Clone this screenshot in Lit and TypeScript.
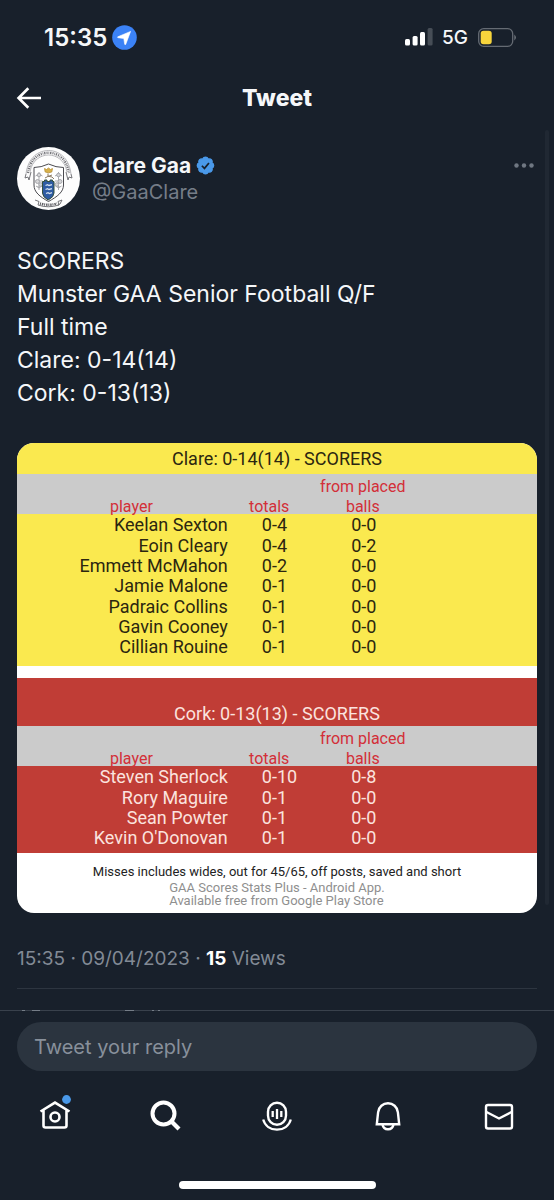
import { LitElement, html, css, svg } from "lit";
import { customElement, property } from "lit/decorators.js";

interface Scorer {
  name: string;
  total: string;
  placed: string;
}

const CLARE: Scorer[] = [
  { name: "Keelan Sexton", total: "0-4", placed: "0-0" },
  { name: "Eoin Cleary", total: "0-4", placed: "0-2" },
  { name: "Emmett McMahon", total: "0-2", placed: "0-0" },
  { name: "Jamie Malone", total: "0-1", placed: "0-0" },
  { name: "Padraic Collins", total: "0-1", placed: "0-0" },
  { name: "Gavin Cooney", total: "0-1", placed: "0-0" },
  { name: "Cillian Rouine", total: "0-1", placed: "0-0" },
];

const CORK: Scorer[] = [
  { name: "Steven Sherlock", total: "0-10", placed: "0-8" },
  { name: "Rory Maguire", total: "0-1", placed: "0-0" },
  { name: "Sean Powter", total: "0-1", placed: "0-0" },
  { name: "Kevin O'Donovan", total: "0-1", placed: "0-0" },
];

@customElement("score-table")
class ScoreTable extends LitElement {
  @property() heading = "";
  @property({ reflect: true }) team = "";
  @property({ attribute: false }) rows: Scorer[] = [];

  static styles = css`
    :host {
      display: block;
      font: 18px/20px Roboto, sans-serif;
      background: #fae94f;
      color: #2b2610;
      padding-bottom: 8px;
    }
    :host([team="cork"]) {
      background: #c03d36;
      color: #fbe3df;
      padding-bottom: 4px;
    }
    table {
      width: 100%;
      table-layout: fixed;
      border-collapse: collapse;
    }
    caption {
      padding: 6px 0 5px;
    }
    :host([team="cork"]) caption {
      padding: 26px 0 2px;
    }
    .name { width: 44%; }
    .total { width: 9%; }
    .placed { width: 27%; }
    th {
      font-size: 16px;
      font-weight: 400;
      color: #d32f38;
      background: #cbcbcb;
      padding: 3px 0 0;
      vertical-align: bottom;
      white-space: nowrap;
    }
    /* Header labels sit tight on the lower edge of the grey band. */
    .label {
      display: block;
      margin-bottom: -3px;
    }
    tbody::before {
      content: "";
      display: block;
      height: 1px;
    }
    td {
      padding: 0;
      text-align: center;
    }
    tr:nth-child(3n + 1) td { padding-bottom: 1px; }
    .player {
      text-align: right;
      padding-right: 18px;
    }
    .sum {
      text-align: left;
      padding-left: 16px;
      white-space: nowrap;
    }
    .free { padding-left: 2px; }
  `;

  render() {
    return html`
      <table>
        <caption>${this.heading}</caption>
        <colgroup>
          <col class="name" />
          <col class="total" />
          <col class="placed" />
          <col />
        </colgroup>
        <thead>
          <tr>
            <th scope="col"><span class="label">player</span></th>
            <th scope="col"><span class="label">totals</span></th>
            <th scope="col"><span class="label">from placed<br />balls</span></th>
            <th></th>
          </tr>
        </thead>
        <tbody>
          ${this.rows.map(
            (r) => html`<tr>
              <td class="player">${r.name}</td>
              <td class="sum">${r.total}</td>
              <td class="free">${r.placed}</td>
              <td></td>
            </tr>`
          )}
        </tbody>
      </table>
    `;
  }
}

const crest = html`
  <svg class="avatar" viewBox="0 0 63 63" role="img" aria-label="Clare Gaa">
    <circle cx="31.5" cy="31.5" r="31.5" fill="#fdfdfd" />
    <g fill="none">
      <path d="M9 27C11 10 22 3.500 31.500 3.500S52 10 54 27" stroke="#8a8a8e" stroke-width=".6" />
      <path d="M13 25C15 13 24 8 31.500 8S48 13 50 25" stroke="#8a8a8e" stroke-width=".6" />
      <path d="M11 26C13 12 22 5.800 31.500 5.800S50 12 52 26" stroke="#75757a" stroke-width="2.400" stroke-dasharray="1.100 .9 .7 .8 1.400 1" />
      <path d="M9 27l-1 4 3-1 1 3 2-8M54 27l1 4-3-1-1 3-2-8" stroke="#66666b" stroke-width=".9" />
      <path d="M17 20.500q7 0 14.500-3.500Q39 20.500 46.500 20.500v17.500c0 7-6 11.500-15 16.500C22.500 49.500 17 45 17 38z" fill="#fff" stroke="#4b4b50" stroke-width="1" />
    </g>
    <g stroke="#a2a3a7" stroke-width=".9" fill="#d6d6d8">
      <path d="M22 25v18M18.500 29l3.500-2 3.500 2M18.500 34h7M19 39l3 2 3-2" />
      <circle cx="22" cy="28" r="1.800" /><circle cx="20.500" cy="34.500" r="2" /><circle cx="23.700" cy="37.500" r="1.800" />
      <path d="M41.500 25v18M38 29l3.500-2 3.500 2M38 34h7M38.500 39l3 2 3-2" />
      <circle cx="41.500" cy="28" r="1.800" /><circle cx="43" cy="34.500" r="2" /><circle cx="39.800" cy="37.500" r="1.800" />
    </g>
    <path d="M27.500 21.500l2 1 2-1.500 2 1.500 2-1-.7 3.500q-3.300 1.500-6.600 0z" fill="#d9b24a" stroke="#b8923a" stroke-width=".8" />
    <path d="M31 26.500v3l4-1.500M28 31q3-3 7-1l2 2" fill="none" stroke="#8b7b63" stroke-width="1" />
    <path d="M25.500 34.500h2V33h2.500v1.500h3V33h2.500v1.500h1.500V46q0 4-5.800 7-5.700-3-5.700-7z" fill="#2d5ba3" stroke="#35503c" stroke-width="1" />
    <path d="M28.500 38.500l2-.8 1.500.8 3-.8M28.500 42.500l2-.8 1.500.8 3-.8M29 46.500l2-.8 1.500.8 2.500-.8" fill="none" stroke="#d5e2ef" stroke-width="1.300" />
    <path d="M18 53l4 1.500-1 3.500q10 3.500 21 0l-1-3.500 4-1.500-2 4-2 1" fill="none" stroke="#66666b" stroke-width=".9" />
    <path d="M23 56.500q8.500 2.500 17 0" fill="none" stroke="#606066" stroke-width="2.400" stroke-dasharray="1 .9 1.500 .8" />
  </svg>
`;

@customElement("app-root")
class AppRoot extends LitElement {
  static styles = css`
    * { box-sizing: border-box; }
    :host {
      display: flex;
      flex-direction: column;
      min-height: 100vh;
      position: relative;
      background: #18202b;
      color: #f5f7f9;
      font-family: Inter, sans-serif;
    }
    svg { display: block; flex: none; }
    button {
      appearance: none;
      border: 0;
      background: none;
      color: inherit;
      padding: 0;
      display: grid;
      place-items: center;
    }
    .status {
      height: 74px;
      padding: 0 37px 0 44px;
      display: flex;
      align-items: center;
      gap: 5px;
    }
    .clock { font-size: 24px; font-weight: 600; }
    .net { font-size: 19px; font-weight: 500; margin: 0 5px 0 4px; }
    .signal { margin-left: auto; }
    .nav {
      height: 48px;
      padding: 0 16px;
      display: grid;
      grid-template-columns: 26px 1fr 26px;
      align-items: center;
    }
    h1 {
      margin: 0;
      text-align: center;
      font-size: 23px;
      line-height: 28px;
      font-weight: 800;
    }
    main { padding: 0 17px; }
    .author {
      display: flex;
      align-items: center;
      gap: 12px;
      padding-top: 25px;
    }
    .avatar { width: 63px; height: 63px; }
    .who { flex: 1; line-height: 26px; font-size: 20px; }
    .display { display: flex; align-items: center; gap: 5px; font-size: 21px; font-weight: 700; }
    .handle { color: #757d88; }
    .more { align-self: flex-start; padding: 16px 2px 0 0; }
    .text {
      margin: 35px 0 33px;
      font-size: 23px;
      line-height: 33px;
      white-space: pre-line;
    }
    .card {
      border-radius: 17px;
      overflow: hidden;
      background: #fff;
      display: flex;
      flex-direction: column;
      gap: 12px;
    }
    .notes {
      font: 13px/13px Roboto, sans-serif;
      text-align: center;
      color: #8f8f8f;
      padding-bottom: 6px;
    }
    .misses { color: #222; margin: 0 0 3px; }
    .app {
      margin: 0 auto;
      width: max-content;
      text-align: left;
    }
    .meta {
      margin: 0;
      padding: 33px 0 16px;
      font-size: 19px;
      line-height: 26px;
      color: #828a95;
      border-bottom: 1px solid #2d3540;
    }
    .meta b { color: #fff; }
    .scroll {
      position: absolute;
      top: 130px;
      right: 5px;
      bottom: 295px;
      width: 4px;
      border-radius: 2px;
      background: #202833;
    }
    .dock {
      position: relative;
      margin-top: auto;
      border-top: 1px solid #39414c;
      padding: 11px 0;
      display: flex;
      flex-direction: column;
      align-items: center;
    }
    .peek {
      position: absolute;
      top: -1px;
      left: 17px;
    }
    .reply { align-self: stretch; padding: 0 17px; }
    input {
      display: block;
      width: 100%;
      height: 49px;
      border: 0;
      border-radius: 25px;
      background: #2b343f;
      padding: 0 17px;
      color: #fff;
      font: 20px Inter, sans-serif;
    }
    input::placeholder { color: #88909b; opacity: 1; }
    .tabs {
      align-self: stretch;
      display: grid;
      grid-template-columns: repeat(5, 1fr);
      margin: 24px 0 42px;
    }
    .indicator {
      width: 197px;
      height: 8px;
      border-radius: 4px;
      background: #fff;
    }
  `;

  private icon(label: string, body: unknown) {
    return html`<button aria-label=${label}>
      <svg width="44" height="44" viewBox="0 0 44 44" fill="none" stroke="#fff" stroke-width="2.4">${body}</svg>
    </button>`;
  }

  render() {
    return html`
      <div class="status">
        <span class="clock">15:35</span>
        <svg width="25" height="25" viewBox="0 0 25 25">
          <circle cx="12.500" cy="12.500" r="12.300" fill="#3b82f6" />
          <path d="M18.600 6.400L5.800 11.800q-.7.600.2.900l5.800.8.900 5.800q.4.900 1 .1z" fill="#fff" stroke="#fff" stroke-width=".6" stroke-linejoin="round" />
        </svg>
        <svg class="signal" width="28" height="18" viewBox="0 0 28 18" fill="#fff">
          <rect x="0" y="11" width="5" height="6.500" rx="1.500" />
          <rect x="7.600" y="8" width="5" height="9.500" rx="1.500" />
          <rect x="15" y="4" width="5" height="13.500" rx="1.500" />
          <rect x="22.600" y="0" width="5" height="17.500" rx="1.500" fill="#464d56" />
        </svg>
        <span class="net">5G</span>
        <svg width="39" height="19" viewBox="0 0 39 19">
          <rect x=".7" y=".7" width="34" height="17.600" rx="5" fill="none" stroke="#656b73" stroke-width="1.300" />
          <rect x="2.700" y="2.700" width="11" height="13.600" rx="2.800" fill="#f7d53c" />
          <path d="M36.500 6.500q2.400 3 0 6z" fill="#8a8f96" />
        </svg>
      </div>

      <header class="nav">
        <button aria-label="Back">
          <svg width="26" height="24" viewBox="0 0 26 24" fill="none" stroke="#fff" stroke-width="2.700">
            <path d="M25 12H3M12.300 2.300L2.600 12l9.700 9.700" />
          </svg>
        </button>
        <h1>Tweet</h1>
      </header>

      <main>
        <div class="author">
          ${crest}
          <div class="who">
            <div class="display">
              Clare Gaa
              <svg width="19" height="19" viewBox="0 0 22 22" role="img" aria-label="Verified">
                <path fill="#4a99e9" d="M20.400 11c0-1.300-.7-2.500-1.900-3.100.5-1.200.2-2.600-.7-3.600-.9-.9-2.300-1.200-3.600-.7C13.600 2.300 12.300 1.500 11 1.500S8.400 2.300 7.800 3.600c-1.300-.5-2.700-.2-3.600.7-.9 1-1.200 2.400-.7 3.600C2.300 8.500 1.500 9.700 1.500 11s.8 2.500 2 3.100c-.5 1.300-.2 2.700.7 3.600 1 .9 2.300 1.200 3.600.7.600 1.200 1.900 2.100 3.200 2.100s2.600-.9 3.200-2.100c1.300.5 2.700.2 3.600-.7.900-.9 1.200-2.300.7-3.600 1.200-.6 1.900-1.800 1.900-3.100z" stroke="#4a99e9" stroke-width="1.600" />
                <path d="M6.800 11.300l3 3 5.200-6.200" fill="none" stroke="#18202b" stroke-width="2" />
              </svg>
            </div>
            <div class="handle">@GaaClare</div>
          </div>
          <button class="more" aria-label="More">
            <svg width="22" height="5" viewBox="0 0 22 5" fill="#6f7782">
              <circle cx="3.500" cy="2.500" r="2.200" /><circle cx="11" cy="2.500" r="2.200" /><circle cx="18.500" cy="2.500" r="2.200" />
            </svg>
          </button>
        </div>

        <p class="text">SCORERS
Munster GAA Senior Football Q/F
Full time
Clare: 0-14(14)
Cork: 0-13(13)</p>

        <div class="card">
          <score-table team="clare" heading="Clare: 0-14(14) - SCORERS" .rows=${CLARE}></score-table>
          <score-table team="cork" heading="Cork: 0-13(13) - SCORERS" .rows=${CORK}></score-table>
          <div class="notes">
            <p class="misses">Misses includes wides, out for 45/65, off posts, saved and short</p>
            <p class="app">GAA Scores Stats Plus - Android App.<br />Available free from Google Play Store</p>
          </div>
        </div>

        <p class="meta">15:35 · 09/04/2023 · <b>15</b> Views</p>
      </main>
      <div class="scroll"></div>

      <footer class="dock">
        <svg class="peek" width="160" height="1" viewBox="0 0 160 1" fill="#757d87" aria-hidden="true">
          <path d="M5 0h3v1H5zM15 0h8v1h-8zM108 0h9v1h-9zM135 0h2v1h-2zM141 0h2v1h-2z" />
        </svg>
        <div class="reply">
          <input type="text" aria-label="Tweet your reply" placeholder="Tweet your reply" />
        </div>
        <nav class="tabs">
          ${this.icon("Home", svg`
            <path d="M7.500 16.500L22 7.600l14.500 8.900M10.500 15v15.500q0 2 2 2h19q2 0 2-2V15" stroke-width="2.600" />
            <circle cx="22" cy="22" r="4.500" stroke-width="2.600" />
            <circle cx="33.500" cy="4.500" r="4.400" fill="#4a99e9" stroke="none" />`)}
          ${this.icon("Search", svg`
            <circle cx="19.500" cy="18.500" r="11" stroke-width="4" />
            <path d="M27.500 26.500l7.500 7.500" stroke-width="4.200" />`)}
          ${this.icon("Spaces", svg`
            <rect x="13" y="7.700" width="18" height="22" rx="9" />
            <path d="M8.200 24.500C10 31 15.500 34.700 22 34.700S34 31 35.800 24.500M17.700 16v6M22 14v10M26.300 16v6" stroke-width="2.300" />`)}
          ${this.icon("Notifications", svg`
            <path d="M10.800 29.300l1.300-12C12.700 11.800 17 8.300 22 8.300s9.300 3.500 9.900 9l1.300 12z" />
            <path d="M16.500 29.500c.5 3 2.700 4.800 5.500 4.800s5-1.800 5.500-4.800" />`)}
          ${this.icon("Messages", svg`
            <rect x="9" y="10" width="26" height="23.500" rx="2" />
            <path d="M9 16.800l13 6.700 13-6.700" />`)}
        </nav>
        <div class="indicator"></div>
      </footer>
    `;
  }
}
